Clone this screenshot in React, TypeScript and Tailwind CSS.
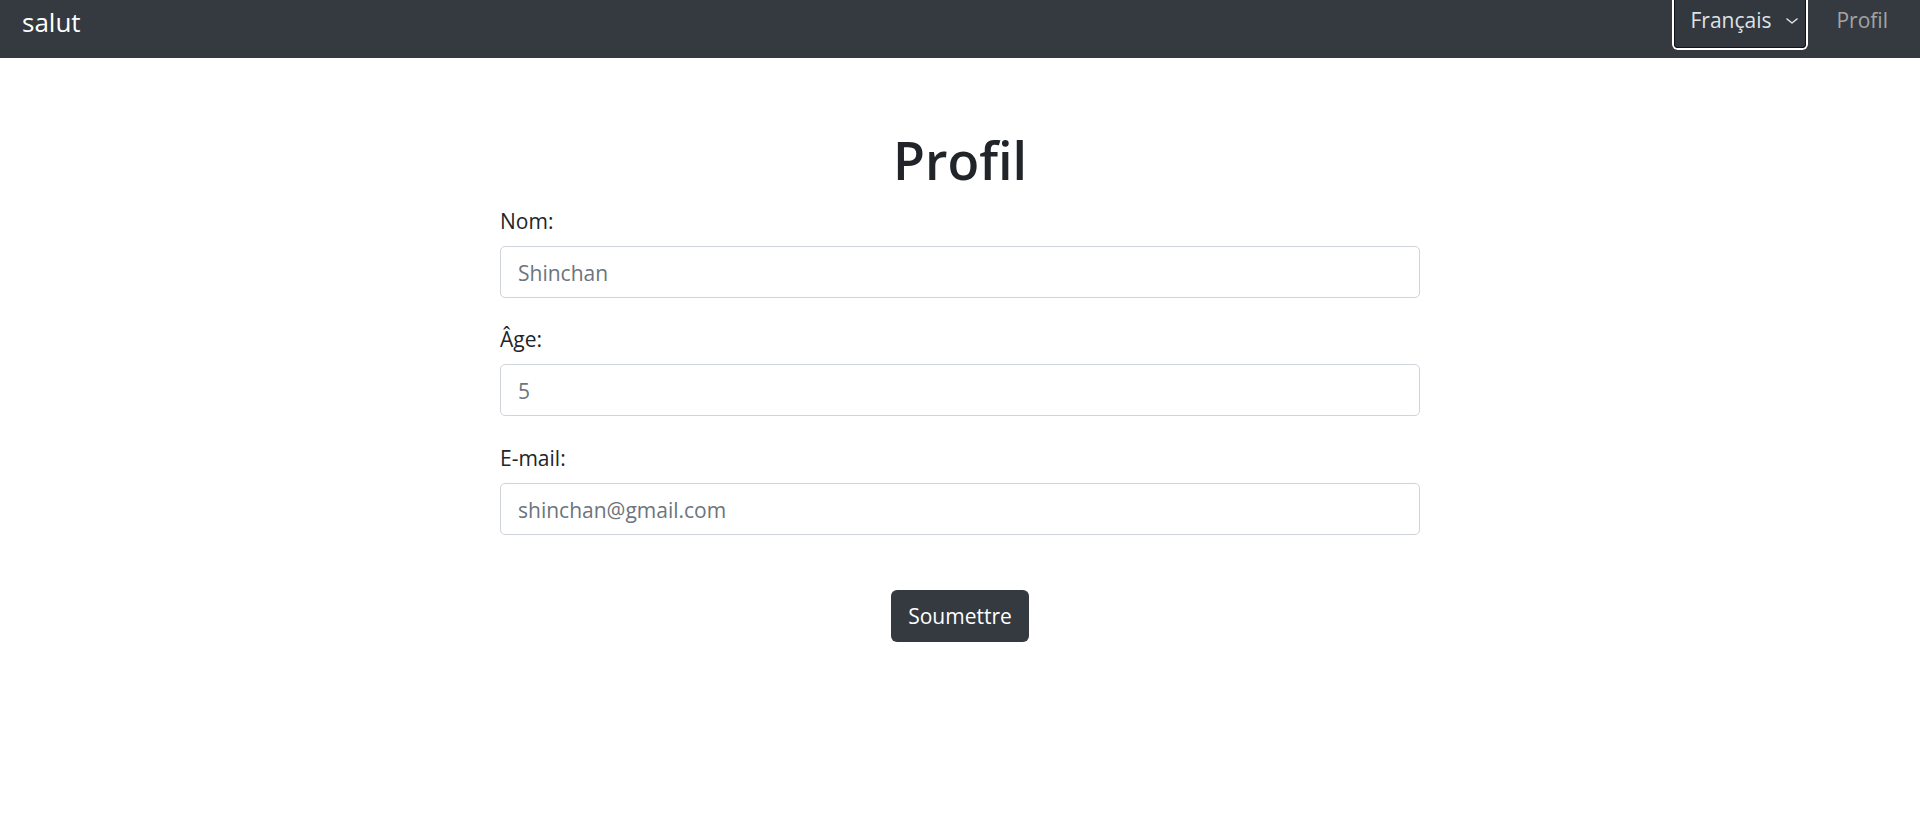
import { useState } from 'react'

const fields = [
  { id: 'nom', label: 'Nom:', placeholder: 'Shinchan', type: 'text', gap: 'mt-[11px]' },
  { id: 'age', label: 'Âge:', placeholder: '5', type: 'number', gap: 'mt-[24px]' },
  { id: 'email', label: 'E-mail:', placeholder: 'shinchan@gmail.com', type: 'email', gap: 'mt-[25px]' },
]

function Navbar() {
  return (
    <nav className="flex h-[58px] items-start bg-[#343a40]">
      <a className="pl-[22px] pt-[3px] text-[26px] leading-[39px] text-white">salut</a>
      <div className="ml-auto flex items-start">
        <div className="h-[50px] w-[136px] rounded-b-[6px] border-2 border-t-0 border-white">
          <div className="flex h-full items-start justify-between rounded-b-[4px] border border-t-0 border-[#111418] bg-[#32383e] pl-[15px] pr-[7px] pt-[4px]">
            <span className="text-[21px] leading-[32px] text-[#dee2e6]">Français</span>
            <svg width="12" height="6" viewBox="0 0 12 6" className="mt-[14px]" fill="none">
              <path d="M1 1l5 4 5-4" stroke="#dee2e6" strokeWidth="1.6" strokeLinecap="round" strokeLinejoin="round" />
            </svg>
          </div>
        </div>
        <a className="ml-[28px] pr-[32px] pt-[4px] text-[21px] leading-[32px] text-[#a1a4a7]">Profil</a>
      </div>
    </nav>
  )
}

export default function App() {
  const [values, setValues] = useState<Record<string, string>>({})

  return (
    <div className="min-h-screen bg-white font-['Open_Sans',sans-serif] text-[#212529]">
      <Navbar />
      <main className="mx-auto w-[920px]">
        <h1 className="mt-[69px] text-center text-[52px] font-semibold leading-[66px]">Profil</h1>
        <form onSubmit={(e) => e.preventDefault()} className="flex flex-col">
          {fields.map((f) => (
            <div key={f.id} className={`${f.gap} flex flex-col`}>
              <label htmlFor={f.id} className="pt-px text-[21px] leading-[32px]">
                {f.label}
              </label>
              <input
                id={f.id}
                type={f.type}
                placeholder={f.placeholder}
                value={values[f.id] ?? ''}
                onChange={(e) => setValues({ ...values, [f.id]: e.target.value })}
                className="mt-[9px] h-[52px] rounded-[5px] border border-[#ced4da] px-[17px] pt-[2px] text-[21px] outline-none placeholder:text-[#6c757d]"
              />
            </div>
          ))}
          <button
            type="submit"
            className="mx-auto mt-[55px] h-[52px] w-[138px] rounded-[6px] bg-[#343a40] pt-px text-[21px] text-white"
          >
            Soumettre
          </button>
        </form>
      </main>
    </div>
  )
}
